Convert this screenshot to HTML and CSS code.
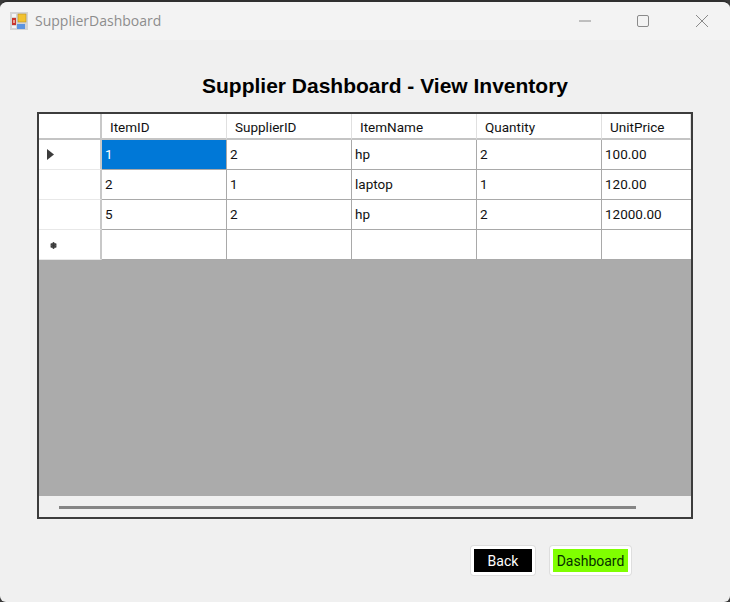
FILE: index.html
```html
<!DOCTYPE html>
<html lang="en">
<head>
<meta charset="utf-8">
<title>SupplierDashboard</title>
<link rel="stylesheet" href="styles.css">
</head>
<body>
<div class="window">
  <header class="titlebar">
    <svg class="app-icon" width="18" height="18" viewBox="0 0 18 18">
      <rect x="0" y="0" width="18" height="18" fill="#d4d4d4"/>
      <rect x="2" y="2" width="4" height="3" fill="#f4f4f4"/>
      <rect x="2" y="6" width="4" height="7" fill="#c8342c"/>
      <rect x="3" y="8" width="2" height="3" fill="#e8a090"/>
      <rect x="2" y="14" width="4" height="2" fill="#f4f4f4"/>
      <rect x="8" y="2" width="8" height="8" fill="#f2c230" stroke="#b98f20" stroke-width=".6"/>
      <rect x="7" y="12" width="8" height="5" fill="#5c94e0"/>
    </svg>
    <span class="title-text">SupplierDashboard</span>
    <div class="window-controls">
      <svg class="ctl-min" width="16" height="16" viewBox="0 0 16 16"><path d="M3 8h12" stroke="#8a8a8a" fill="none"/></svg>
      <svg width="16" height="16" viewBox="0 0 16 16"><rect x="2.500" y="2.500" width="11" height="11" rx="1.500" stroke="#8a8a8a" fill="none"/></svg>
      <svg width="16" height="16" viewBox="0 0 16 16"><path d="M2 2l12 12M14 2L2 14" stroke="#8a8a8a" fill="none"/></svg>
    </div>
  </header>
  <main class="content">
    <h1 class="heading">Supplier Dashboard - View Inventory</h1>
    <section class="grid">
      <table class="data-table">
        <colgroup>
          <col class="col-head"><col class="col-std"><col class="col-std"><col class="col-std"><col class="col-std"><col class="col-last">
        </colgroup>
        <thead>
          <tr class="row-header">
            <th class="corner"></th><th>ItemID</th><th>SupplierID</th><th>ItemName</th><th>Quantity</th><th>UnitPrice</th>
          </tr>
        </thead>
        <tbody>
          <tr>
            <th class="row-marker"><svg width="7" height="11" viewBox="0 0 7 11"><path d="M0 0l7 5.500L0 11z" fill="#3c3c3c"/></svg></th>
            <td class="selected">1</td><td>2</td><td>hp</td><td>2</td><td>100.00</td>
          </tr>
          <tr><th class="row-marker"></th><td>2</td><td>1</td><td>laptop</td><td>1</td><td>120.00</td></tr>
          <tr><th class="row-marker"></th><td>5</td><td>2</td><td>hp</td><td>2</td><td>12000.00</td></tr>
          <tr class="new-row">
            <th class="row-marker">
              <svg class="star" width="7" height="7" viewBox="0 0 7 7"><circle cx="3.500" cy="3.500" r="3" fill="#555"/><path d="M3.500 0v7M0.500 2l6 3M6.500 2l-6 3" stroke="#333" stroke-width=".8"/></svg>
            </th>
            <td></td><td></td><td></td><td></td><td></td>
          </tr>
        </tbody>
      </table>
      <div class="grid-empty"></div>
      <div class="scrollbar"><div class="thumb"></div></div>
    </section>
    <div class="actions">
      <button class="btn btn-back" type="button">Back</button>
      <button class="btn btn-dash" type="button">Dashboard</button>
    </div>
  </main>
</div>
</body>
</html>
```

FILE: styles.css
```css
* { box-sizing: border-box; }
html, body { margin: 0; padding: 0; background: #3a3a3a; }
body { width: 730px; height: 602px; overflow: hidden; font-family: Roboto, "Open Sans", sans-serif; }
.window {
  width: 730px; height: 602px;
  background: #f0f0f0;
  border-top: 2px solid #2f2f2f;
  border-radius: 8px 8px 6px 6px;
  display: flex; flex-direction: column;
  overflow: hidden;
}
.titlebar {
  height: 38px; flex: none;
  background: #f3f3f3;
  display: flex; align-items: flex-start;
  padding: 10px 20px 0 10px;
}
.app-icon { flex: none; margin-right: 7px; }
.title-text { font-family: "Open Sans", sans-serif; font-size: 14px; line-height: 18px; color: #8d8d8d; }
.window-controls { margin-left: auto; display: flex; gap: 43px; align-items: center; height: 18px; }
.content { flex: 1; display: flex; flex-direction: column; padding: 0 37px; }
.heading {
  margin: 31px 0 12px;
  height: 29px; line-height: 29px;
  text-align: center; font-family: "Liberation Sans", sans-serif;
  font-size: 21px; font-weight: 700; color: #000;
  padding-left: 40px; white-space: nowrap;
}
.grid {
  width: 656px; height: 407px;
  border: 2px solid #3c3c3c;
  background: #ababab;
  display: flex; flex-direction: column;
}
.data-table { border-collapse: separate; border-spacing: 0; table-layout: fixed; width: 652px; background: #fff; flex: none; }
.col-head { width: 63px; }
.col-std { width: 125px; }
.col-last { width: 89px; }
.data-table th, .data-table td {
  padding: 0 0 2px 3px;
  font-size: 13.500px; font-weight: 400; color: #111; text-align: left;
  border-right: 1px solid #a9a9a9; border-bottom: 1px solid #a9a9a9;
  height: 30px; overflow: hidden; white-space: nowrap;
}
.data-table td:last-child, .data-table th:last-child { border-right: none; }
.data-table .row-header th { height: 26px; padding: 2px 0 0 8px; border-bottom: 2px solid #c4c4c4; border-right: 1px solid #e0e0e0; }
.data-table .row-header .corner { border-right: 2px solid #c8c8c8; }
.data-table .row-marker { border-right: 2px solid #c8c8c8; border-bottom: 1px solid #e8e8e8; padding-left: 8px; }
.data-table .row-marker svg { display: block; margin-top: 1px; }
.data-table td.selected { background: #0078d7; color: #fff; }
.data-table .row-marker .star { margin: 3px 0 0 3px; }
.grid-empty { flex: 1; }
.scrollbar { height: 21px; flex: none; background: #f0f0f0; padding: 10px 0 0 20px; }
.thumb { width: 577px; height: 3px; background: #858585; }
.actions { display: flex; justify-content: flex-end; gap: 15px; padding: 27px 62px 0 0; }
.btn {
  height: 29px; padding: 0; font: 14px Roboto, sans-serif;
  border: 3px solid #fff; border-radius: 3px;
  box-shadow: 0 0 0 1px #dedede;
}
.btn-back { width: 64px; background: #000; color: #fff; }
.btn-dash { width: 81px; background: #80ff00; color: #063000; }
```
